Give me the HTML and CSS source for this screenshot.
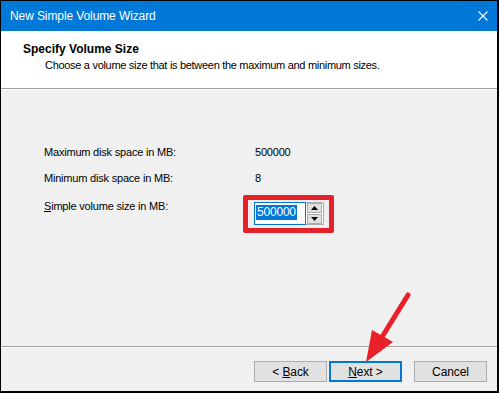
FILE: index.html
```html
<!DOCTYPE html>
<html>
<head>
<meta charset="utf-8">
<link rel="stylesheet" href="styles.css">
</head>
<body>
<div class="window">
  <div class="titlebar">
    <span class="title">New Simple Volume Wizard</span>
    <svg class="close" width="10" height="10" viewBox="0 0 10 10"><path d="M0.5 0.5 L9.5 9.5 M9.5 0.5 L0.5 9.5" stroke="#fff" stroke-width="1.1" fill="none"/></svg>
  </div>
  <div class="header">
    <div class="h-title">Specify Volume Size</div>
    <div class="h-sub">Choose a volume size that is between the maximum and minimum sizes.</div>
  </div>
  <div class="body">
    <div class="grid">
      <div class="lbl r1">Maximum disk space in MB:</div>
      <div class="val r1">500000</div>
      <div class="lbl r2">Minimum disk space in MB:</div>
      <div class="val r2">8</div>
      <div class="lbl r3"><u>S</u>imple volume size in MB:</div>
      <div class="val r3">
        <div class="redbox">
          <div class="spin">
            <div class="input"><span class="sel">500000</span></div>
            <div class="arrows">
              <div class="abtn"><svg width="7" height="4" viewBox="0 0 7 4"><path d="M3.5 0 L7 4 L0 4 Z" fill="#000"/></svg></div>
              <div class="abtn"><svg width="7" height="4" viewBox="0 0 7 4"><path d="M0 0 L7 0 L3.5 4 Z" fill="#000"/></svg></div>
            </div>
          </div>
        </div>
      </div>
    </div>
  </div>
  <div class="footer">
    <div class="btn"><span>&lt; <u>B</u>ack</span></div>
    <div class="btn primary"><span><u>N</u>ext &gt;</span></div>
    <div class="btn cancel"><span>Cancel</span></div>
  </div>
  <svg class="arrow" width="499" height="393" viewBox="0 0 499 393">
    <line x1="408" y1="295" x2="382" y2="337" stroke="#e8202a" stroke-width="5" stroke-linecap="round"/>
    <polygon points="366,362 372,330 393,342" fill="#e8202a"/>
  </svg>
</div>
</body>
</html>
```

FILE: styles.css
```css
html, body {
  margin: 0;
  padding: 0;
}
body {
  font-family: "Liberation Sans", Arial, sans-serif;
  font-size: 11px;
  letter-spacing: -0.2px;
  color: #000;
  background: #fff;
}
.window {
  position: relative;
  width: 499px;
  height: 393px;
  box-sizing: border-box;
  border-top: 1px solid #000;
  border-left: 1px solid #000;
  border-right: 2px solid #000;
  border-bottom: 2px solid #000;
  background: #f0f0f0;
  display: flex;
  flex-direction: column;
}
.titlebar {
  height: 30px;
  background: #0078d7;
  display: flex;
  align-items: center;
  justify-content: space-between;
  padding: 0 9px 0 9px;
  color: #fff;
  flex: none;
}
.title {
  font-size: 12px;
  letter-spacing: -0.1px;
  margin-top: -1px;
}
.close {
  margin-top: -1px;
}
.header {
  height: 58px;
  background: #fff;
  border-bottom: 1px solid #a0a0a0;
  box-shadow: 0 1px 0 #fff;
  box-sizing: border-box;
  padding: 10px 0 0 22px;
  flex: none;
}
.h-title {
  font-weight: bold;
  font-size: 12px;
  letter-spacing: 0;
  line-height: 16px;
}
.h-sub {
  padding-left: 22px;
  line-height: 16px;
  letter-spacing: -0.3px;
}
.body {
  flex: 1;
  border-bottom: 1px solid #a0a0a0;
  box-shadow: 0 1px 0 #fff;
  padding: 56px 0 0 43px;
}
.grid {
  display: grid;
  grid-template-columns: 211px auto;
  grid-template-rows: 26px 28px 40px;
  line-height: 14px;
}
.val {
  align-self: start;
}
.r3.val {
  margin-top: -4px;
  margin-left: -12px;
}
.redbox {
  display: inline-block;
  border: 5px solid #e8202a;
  border-radius: 2px;
  padding: 2px 5px 3px 6px;
}
.spin {
  display: flex;
  height: 23px;
}
.input {
  width: 52px;
  height: 23px;
  box-sizing: border-box;
  border: 1px solid #0078d7;
  background: #fff;
  padding: 2px 0 0 1px;
}
.sel {
  display: inline-block;
  background: #0078d7;
  color: #fff;
  font-size: 12px;
  letter-spacing: -0.2px;
  line-height: 15px;
  padding: 0 1px;
}
.arrows {
  display: flex;
  flex-direction: column;
  width: 18px;
  height: 23px;
  box-sizing: border-box;
  border: 1px solid #adadad;
  border-left: none;
  background: #fff;
  padding: 0 1px;
  justify-content: space-between;
}
.abtn {
  height: 10px;
  background: #e1e1e1;
  border: 1px solid #adadad;
  box-sizing: border-box;
  display: flex;
  align-items: center;
  justify-content: center;
}
.footer {
  height: 44px;
  flex: none;
  display: flex;
  justify-content: flex-end;
  align-items: flex-start;
  padding: 14px 10px 0 0;
  box-sizing: border-box;
  gap: 2px;
  font-size: 12px;
  letter-spacing: -0.1px;
}
.btn {
  width: 73px;
  height: 21px;
  box-sizing: border-box;
  background: #e1e1e1;
  border: 1px solid #adadad;
  display: flex;
  align-items: center;
  justify-content: center;
}
.btn.primary {
  border: 2px solid #0078d7;
}
.btn.cancel {
  margin-left: 10px;
}
.arrow {
  position: absolute;
  left: -1px;
  top: -1px;
  pointer-events: none;
}
```
